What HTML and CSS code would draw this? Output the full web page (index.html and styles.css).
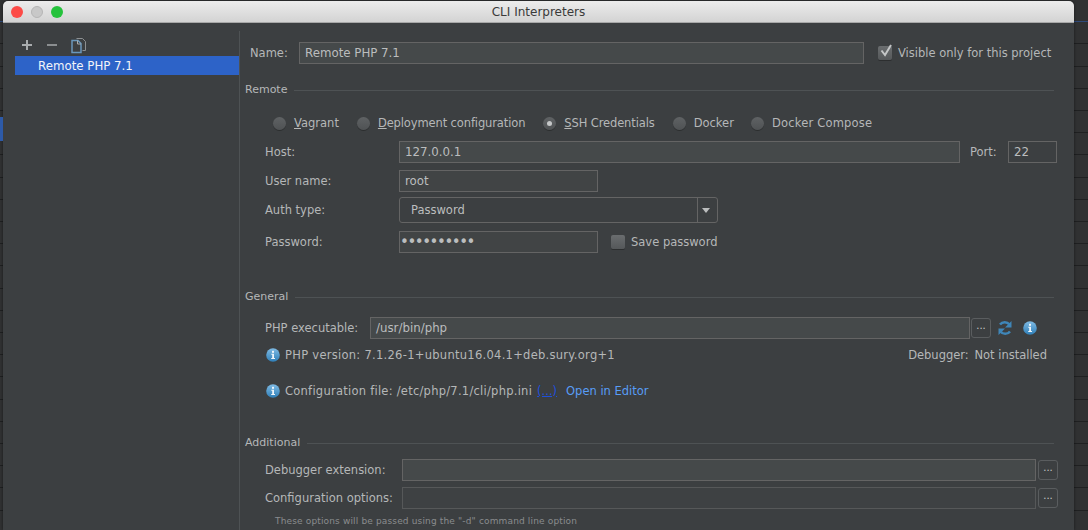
FILE: index.html
```html
<!DOCTYPE html>
<html>
<head>
  <title>CLI Interpreters</title>
  <link rel="stylesheet" href="styles.css">
</head>
<body>
  <div class="backdrop">
    <span class="side-mark"></span>
    <div class="window">
      <header class="titlebar">
        <div class="lights">
          <span class="light red"></span>
          <span class="light grey"></span>
          <span class="light green"></span>
        </div>
        <div class="title">CLI Interpreters</div>
      </header>
      <div class="content">
        <aside class="sidebar">
          <div class="toolbar">
            <svg class="tool" width="12" height="12" viewBox="0 0 12 12"><path d="M1 6h10M6 1v10" stroke="#a9acae" stroke-width="2"/></svg>
            <svg class="tool" width="12" height="12" viewBox="0 0 12 12"><path d="M1 6h10" stroke="#8b8e90" stroke-width="2"/></svg>
            <svg class="tool" width="15" height="17" viewBox="0 0 15 17">
              <path d="M5.500 1.500h6l3 3v9h-3" fill="none" stroke="#8d9092"/>
              <path d="M1 3.500h6l3 3v9H1z" fill="#3c3f41" stroke="#6a97bb" stroke-width="1.500"/>
              <path d="M6.500 3.500v3.500h3.500" fill="none" stroke="#a9acae"/>
            </svg>
          </div>
          <div class="list-item">Remote PHP 7.1</div>
        </aside>
        <main class="panel">
          <div class="name-row">
            <label class="name-label">Name:</label>
            <div class="field name-field">Remote PHP 7.1</div>
            <label class="check checked">
              <span class="box"><svg width="16" height="16" viewBox="0 0 16 16"><path d="M3.500 7.500l3.500 4.500 6-10" fill="none" stroke="#c4c6c7" stroke-width="2"/></svg></span>
              Visible only for this project
            </label>
          </div>

          <div class="section-head remote-head"><span>Remote</span><i></i></div>
          <div class="radios">
            <label class="radio"><span class="dot"></span><span><u>V</u>agrant</span></label>
            <label class="radio"><span class="dot"></span><span><u>D</u>eployment configuration</span></label>
            <label class="radio"><span class="dot on"></span><span><u>S</u>SH Credentials</span></label>
            <label class="radio"><span class="dot"></span><span>Docker</span></label>
            <label class="radio"><span class="dot"></span><span>Docker Compose</span></label>
          </div>
          <div class="form-row host-row">
            <label class="row-label">Host:</label>
            <div class="field host-field">127.0.0.1</div>
            <label class="port-label">Port:</label>
            <div class="field port-field">22</div>
          </div>
          <div class="form-row user-row">
            <label class="row-label">User name:</label>
            <div class="field short-field">root</div>
          </div>
          <div class="form-row auth-row">
            <label class="row-label">Auth type:</label>
            <div class="select">
              <span class="select-value">Password</span>
              <span class="select-arrow"></span>
            </div>
          </div>
          <div class="form-row pass-row">
            <label class="row-label">Password:</label>
            <div class="field short-field dots">••••••••••</div>
            <label class="check save">
              <span class="box"></span>
              Save password
            </label>
          </div>

          <div class="section-head general-head"><span>General</span><i></i></div>
          <div class="form-row exec-row">
            <label class="exec-label">PHP executable:</label>
            <div class="field exec-field">/usr/bin/php</div>
            <span class="more">...</span>
            <svg class="reload" width="16" height="16" viewBox="0 0 16 16">
              <path d="M12.500 4.500A6 6 0 0 0 3 4.500M3.500 11.500a6 6 0 0 0 9.500 0" fill="none" stroke="#3f86b8" stroke-width="2.500"/>
              <path d="M14.500 1v6.500H8zM1.500 15V8.500H8z" fill="#3f86b8"/>
            </svg>
            <svg class="info exec-info" width="14" height="14" viewBox="0 0 14 14"><use href="#info"/></svg>
          </div>
          <div class="info-row version-row">
            <svg class="info" width="14" height="14" viewBox="0 0 14 14"><use href="#info"/></svg>
            <span class="version-text">PHP version: 7.1.26-1+ubuntu16.04.1+deb.sury.org+1</span>
            <span class="debugger">Debugger: <span class="debugger-state">Not installed</span></span>
          </div>
          <div class="info-row config-row">
            <svg class="info" width="14" height="14" viewBox="0 0 14 14"><use href="#info"/></svg>
            <span class="config-text">Configuration file: /etc/php/7.1/cli/php.ini</span>
            <a class="dots-link">(...)</a>
            <a class="open-link">Open in Editor</a>
          </div>

          <div class="section-head additional-head"><span>Additional</span><i></i></div>
          <div class="form-row extra-row first-extra">
            <label class="extra-label">Debugger extension:</label>
            <div class="field extra-field lit">&nbsp;</div>
            <span class="more">...</span>
          </div>
          <div class="form-row extra-row">
            <label class="extra-label">Configuration options:</label>
            <div class="field extra-field">&nbsp;</div>
            <span class="more">...</span>
          </div>
          <div class="hint">These options will be passed using the "-d" command line option</div>
        </main>
      </div>
    </div>
  </div>

  <svg class="defs" width="0" height="0">
    <defs>
      <linearGradient id="infoFill" x1="0" y1="0" x2="0" y2="1">
        <stop offset="0" stop-color="#7fbbe4"/>
        <stop offset="1" stop-color="#2f7fb8"/>
      </linearGradient>
      <g id="info">
        <circle cx="7" cy="7" r="6.800" fill="url(#infoFill)"/>
        <rect x="6" y="2.800" width="2" height="2" fill="#eef5fa"/>
        <path d="M5.300 5.800H8v4.300h1v1H5.200v-1h1V6.800h-0.900z" fill="#eef5fa"/>
      </g>
    </defs>
  </svg>
</body>
</html>
```

FILE: styles.css
```css
* {
  box-sizing: border-box;
}
html, body {
  margin: 0;
  height: 100%;
}
body {
  background: #2b2b2b;
  font-family: "DejaVu Sans", "Liberation Sans", sans-serif;
  font-size: 11.5px;
  color: #b5b7b8;
  overflow: hidden;
}
.backdrop {
  position: relative;
  width: 1088px;
  height: 530px;
  padding: 1px 14px 0 3px;
  background:
    linear-gradient(#2f4a7a, #2f4a7a) 0 21px / 100% 1px no-repeat,
    repeating-linear-gradient(#303132 0, #303132 21.200px, #1f2021 21.200px, #1f2021 22.200px);
}
.side-mark {
  position: absolute;
  left: 0;
  top: 117px;
  width: 3px;
  height: 24px;
  background: #2d5aa8;
}
.defs {
  position: absolute;
}

/* Ventana */
.window {
  height: 529px;
  background: #3c3f41;
  border-radius: 5px 5px 0 0;
  box-shadow: 0 0 3px rgba(0,0,0,0.5);
  overflow: hidden;
  display: flex;
  flex-direction: column;
}
.titlebar {
  position: relative;
  height: 22px;
  flex: none;
  display: flex;
  align-items: center;
  justify-content: center;
  background: linear-gradient(#ececec, #d3d3d3);
  border-bottom: 1px solid #a8a8a8;
}
.title {
  font-size: 12px;
  color: #3a3a3a;
}
.lights {
  position: absolute;
  left: 8px;
  top: 5px;
  display: flex;
  gap: 8px;
}
.light {
  width: 12px;
  height: 12px;
  border-radius: 50%;
}
.red { background: #fc4b47; }
.grey { background: #c8c8c8; border: 1px solid #b5b5b5; }
.green { background: #25c23c; }

.content {
  flex: 1;
  display: flex;
  min-height: 0;
}

/* Lista izquierda */
.sidebar {
  width: 236px;
  flex: none;
  padding: 11px 0 0 12px;
}
.toolbar {
  display: flex;
  align-items: center;
  height: 22px;
  padding-left: 6px;
}
.tool {
  flex: none;
  margin-right: 13px;
}
.list-item {
  height: 19px;
  line-height: 20px;
  padding-left: 23px;
  background: #2d63c8;
  color: #f2f4f8;
  font-size: 11.800px;
}

/* Panel derecho */
.panel {
  flex: 1;
  margin-top: 8px;
  border-left: 1px solid #4e5254;
  position: relative;
  min-width: 0;
}
.field {
  height: 22px;
  line-height: 20px;
  padding-left: 5px;
  border: 1px solid #646464;
  background: #45494a;
  color: #bbbdbe;
  font-size: 11.800px;
  flex: none;
}
.name-row {
  display: flex;
  align-items: center;
  padding: 11px 0 0 10px;
}
.name-label {
  width: 49px;
}
.name-field {
  width: 565px;
}
.check {
  display: flex;
  align-items: center;
  gap: 6px;
}
.check.checked {
  margin-left: 14px;
}
.box {
  width: 14px;
  height: 14px;
  flex: none;
  border-radius: 2px;
  background: linear-gradient(#6a6d6f, #55585a);
  box-shadow: 0 1px 0 #2c2e2f;
  display: block;
  position: relative;
}
.box svg {
  position: absolute;
  top: -3px;
  left: 0;
}

.section-head {
  display: flex;
  align-items: center;
  gap: 7px;
  padding: 0 20px 0 5px;
  height: 16px;
  font-size: 11px;
}
.section-head i {
  flex: 1;
  height: 1px;
  margin-top: 2px;
  background: #4e5254;
}
.remote-head { margin-top: 17px; }
.general-head { margin-top: 35px; }
.additional-head { margin-top: 36px; }

.radios {
  display: flex;
  margin: 18px 0 0 33px;
  height: 16px;
  align-items: center;
}
.radio {
  display: flex;
  align-items: center;
  gap: 8px;
  margin-right: 17px;
}
.radio:nth-child(1) { margin-right: 18px; }
.radio:nth-child(2) { margin-right: 18px; letter-spacing: -0.120px; }
.radio:nth-child(3) { margin-right: 18px; letter-spacing: -0.120px; }
.radio:nth-child(5) { letter-spacing: 0.200px; }
.dot {
  width: 13px;
  height: 13px;
  border-radius: 50%;
  background: linear-gradient(#5f6264, #4f5254);
  box-shadow: 0 1px 0 #2c2e2f;
  position: relative;
}
.dot.on::after {
  content: "";
  position: absolute;
  left: 4px;
  top: 4px;
  width: 5px;
  height: 5px;
  border-radius: 50%;
  background: #c5c7c8;
}

.form-row {
  display: flex;
  align-items: center;
}
.row-label {
  width: 159px;
  padding-left: 25px;
  flex: none;
}
.host-row { margin-top: 10px; }
.user-row { margin-top: 7px; }
.auth-row { margin-top: 5px; }
.pass-row { margin-top: 8px; }
.host-field { width: 561px; }
.port-label {
  margin-left: 10px;
  width: 38px;
}
.port-field {
  width: 49px;
  background: #3c3f41;
}
.short-field {
  width: 199px;
  background: #45494a;
}
.user-row .field,
.pass-row .field {
  background: #414445;
}
.select {
  width: 319px;
  height: 26px;
  display: flex;
  border: 1px solid #646464;
  border-radius: 3px;
}
.select-value {
  flex: 1;
  padding-left: 11px;
  line-height: 24px;
  color: #bbbdbe;
}
.select-arrow {
  width: 20px;
  border-left: 1px solid #646464;
  position: relative;
}
.select-arrow::after {
  content: "";
  position: absolute;
  left: 4px;
  top: 10px;
  border-style: solid;
  border-width: 5px 4px 0;
  border-color: #bbbdbe transparent transparent;
}
.field.dots {
  font-size: 15px;
  letter-spacing: -1.450px;
  padding-left: 0;
}
.save {
  margin-left: 13px;
}

.exec-row {
  margin-top: 13px;
  padding-left: 25px;
}
.exec-label {
  width: 105px;
  flex: none;
}
.exec-field {
  width: 600px;
}
.more {
  width: 20px;
  height: 20px;
  line-height: 14px;
  margin-left: 1px;
  border: 1px solid #5a5d5f;
  border-radius: 3px;
  text-align: center;
  font-size: 10px;
  color: #c8c9ca;
  flex: none;
}
.reload {
  margin-left: 6px;
  flex: none;
}
.exec-info {
  margin-left: 10px;
}
.info {
  flex: none;
}
.info-row {
  display: flex;
  align-items: center;
  padding-left: 26px;
  gap: 5px;
}
.version-row { margin-top: 9px; position: relative; }
.version-text { letter-spacing: 0.280px; }
.config-row { margin-top: 22px; }
.config-text { letter-spacing: 0.250px; }
.debugger {
  position: absolute;
  right: 27px;
}
.debugger-state {
  margin-left: 2px;
}
.dots-link {
  color: #1f50dc;
  text-decoration: underline;
}
.open-link {
  margin-left: 4px;
  color: #589df6;
}

.extra-row {
  padding-left: 25px;
  margin-top: 6px;
}
.first-extra.extra-row { margin-top: 9px; }
.extra-label {
  width: 137px;
  flex: none;
}
.extra-field {
  width: 634px;
  background: #3e4143;
  border-color: #565859;
}
.extra-field.lit {
  background: #45494a;
  border-color: #646464;
}
.extra-row .more {
  margin-left: 2px;
}
.hint {
  margin: 7px 0 0 35px;
  font-size: 9px;
  letter-spacing: 0.150px;
  color: #8a8c8e;
}
```
